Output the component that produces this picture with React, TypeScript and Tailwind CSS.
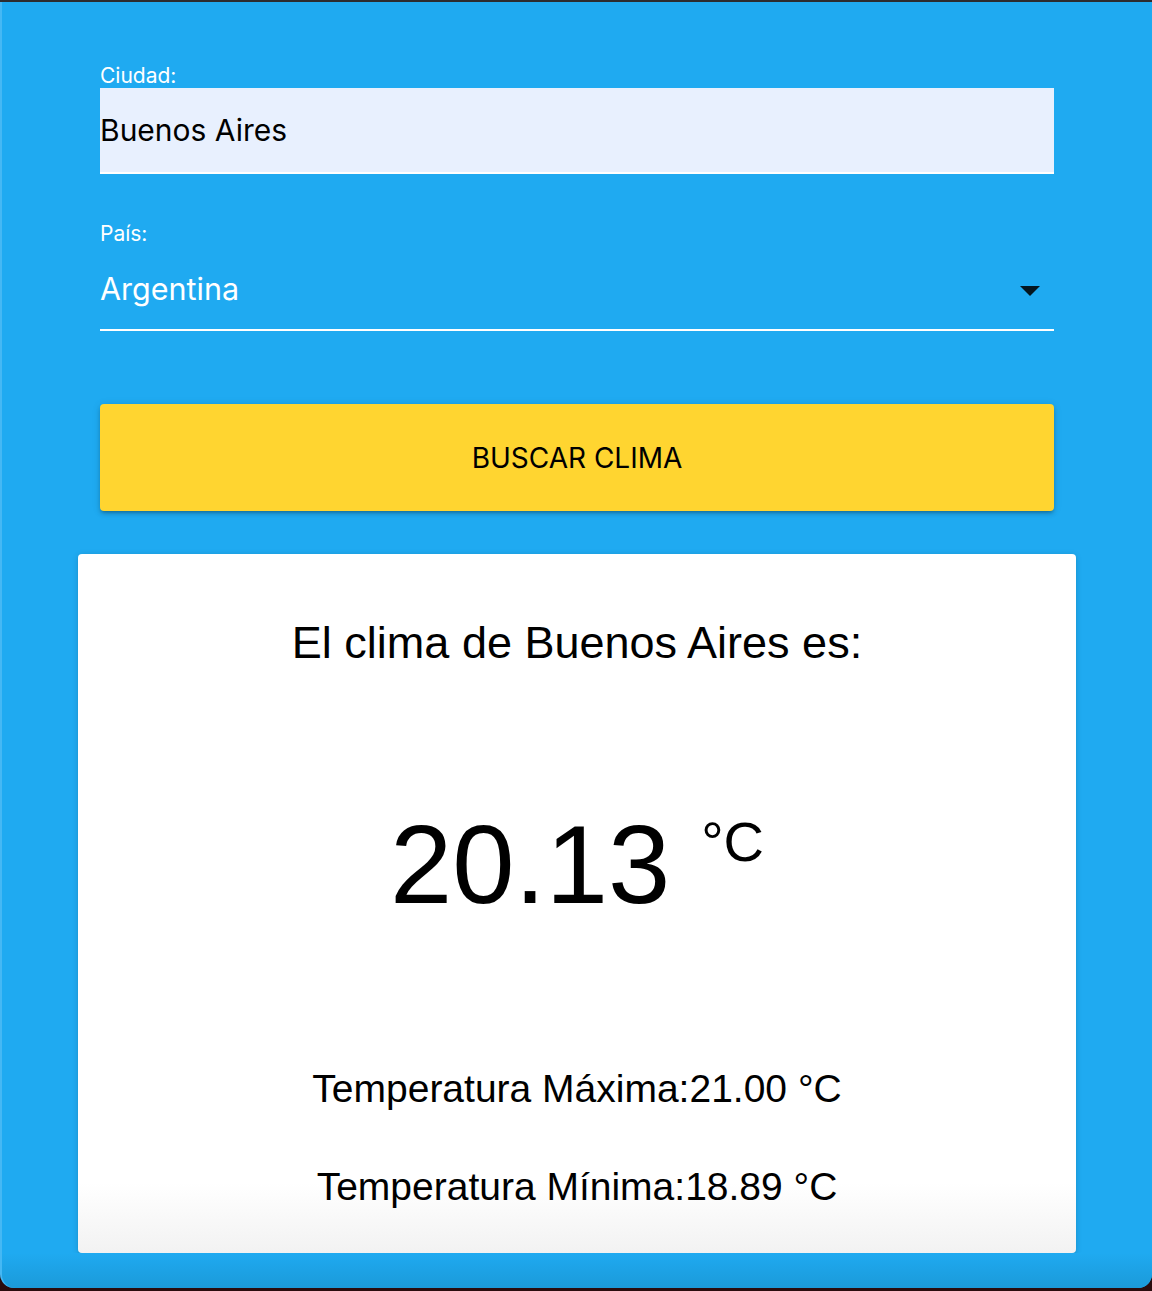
import React from "react"

const sans = { fontFamily: "Inter, 'Noto Sans', sans-serif" }

export default function App() {
  return (
    <div className="w-full min-h-[1291px] bg-[#2a0c0e] pb-[3px]">
      <div className="h-[2px] bg-[#2c2c30]" />
      <div className="min-h-[1286px] bg-[#1faaf1] rounded-b-[14px] border-l-2 border-[#45b8f4] flex flex-col">
        <form className="flex flex-col pt-[62px] px-[98px]" style={sans}>
          <label className="text-[21px] leading-[24px] text-white">Ciudad:</label>
          <div className="h-[86px] bg-[#e8f0fe] border-b-2 border-white flex items-center">
            <span className="text-[30px] leading-[36px] text-black">Buenos Aires</span>
          </div>

          <label className="mt-[48px] text-[21px] leading-[24px] text-white">País:</label>
          <div className="mt-[25px] h-[60px] border-b-2 border-white flex items-start justify-between">
            <span className="text-[30.5px] leading-[36px] text-white">Argentina</span>
            <svg width="20" height="10" viewBox="0 0 20 10" className="mt-[15px] mr-[14px]">
              <polygon points="0,0 20,0 10,10" fill="rgba(0,0,0,0.87)" />
            </svg>
          </div>

          <button
            type="button"
            className="mt-[73px] h-[107px] bg-[#ffd530] rounded-[4px] shadow-[0_3px_3px_-2px_rgba(0,0,0,0.2),0_3px_4px_0_rgba(0,0,0,0.14),0_1px_8px_0_rgba(0,0,0,0.12)] text-[28px] leading-[32px] text-black"
          >
            BUSCAR CLIMA
          </button>
        </form>

        <div
          className="mt-[43px] mx-[76px] bg-gradient-to-b from-white via-white via-[90%] to-[#f2f2f2] rounded-[4px] shadow-[0_2px_2px_-1px_rgba(0,0,0,0.25),0_1px_6px_0_rgba(0,0,0,0.15)] flex flex-col items-center pt-[66px] pb-[47px] text-black"
          style={{ fontFamily: "'Liberation Sans', Arial, sans-serif" }}
        >
          <h2 className="text-[45px] leading-[45px]">El clima de Buenos Aires es:</h2>
          <div className="mt-[144px] flex items-start">
            <span className="text-[112px] leading-[112px]">20.13</span>
            <span className="ml-[31px] mt-[5px] text-[56px] leading-[56px]">°C</span>
          </div>
          <p className="mt-[148px] text-[39px] leading-[39px]">Temperatura Máxima:21.00 °C</p>
          <p className="mt-[59px] text-[39px] leading-[39px]">Temperatura Mínima:18.89 °C</p>
        </div>
        <div className="flex-1 bg-gradient-to-b from-[#1faaf1] to-[#1b9ad9] rounded-b-[14px]" />
      </div>
    </div>
  )
}
